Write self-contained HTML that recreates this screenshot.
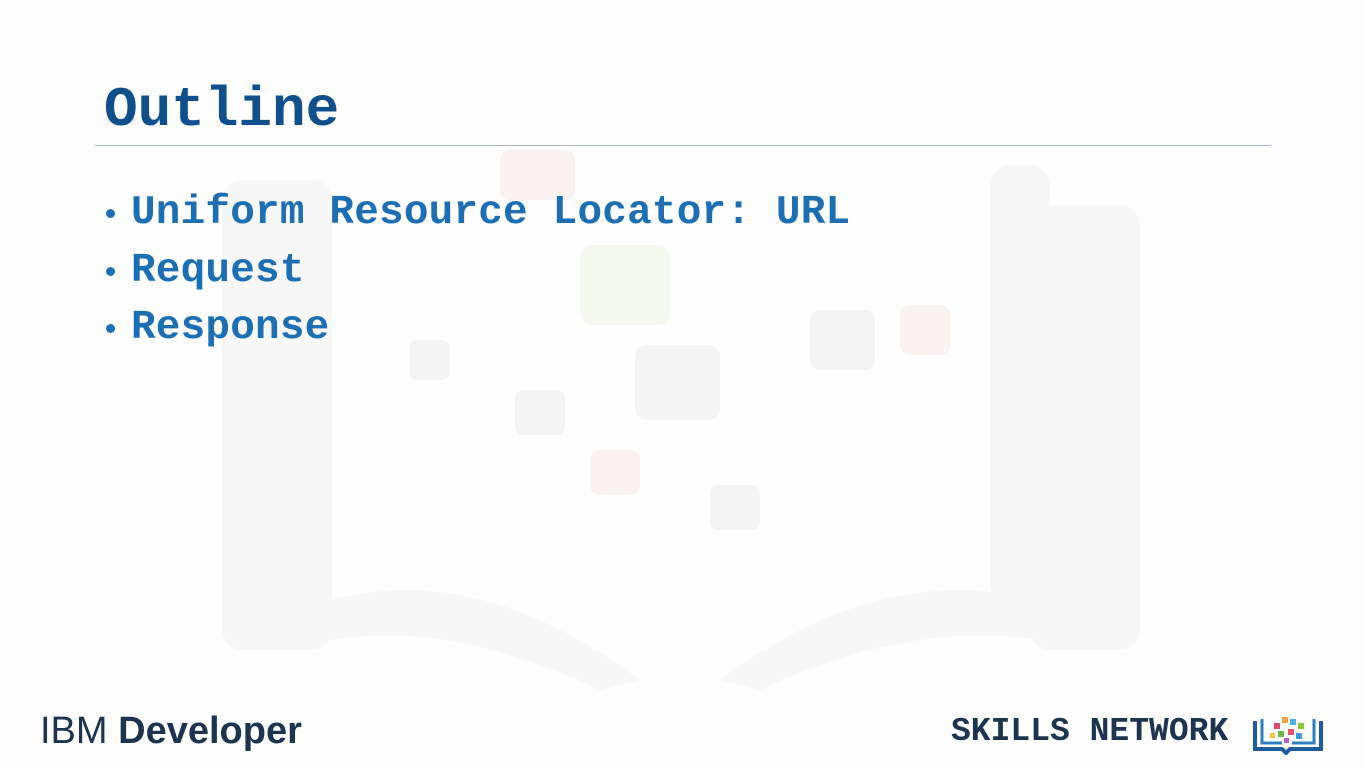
<!DOCTYPE html>
<html><head><meta charset="utf-8"><style>
body{margin:0;width:1366px;height:768px;background:#fdfdfd;position:relative;overflow:hidden;font-family:"Liberation Mono",monospace}
.t{position:absolute;left:104px;top:78px;font-size:56px;font-weight:bold;color:#0f4f8c}
.line{position:absolute;left:95px;top:145px;width:1176px;height:1px;background:#a7b5d2}
.b{position:absolute;left:131px;font-size:41px;font-weight:bold;color:#1c6fb3;letter-spacing:0.2px}
.d{position:absolute;left:106px;width:9px;height:9px;border-radius:50%;background:#1c6fb3}
.ibm{position:absolute;left:40px;top:710px;font-family:"Liberation Sans",sans-serif;font-size:38px;color:#1c3450}
.sk{position:absolute;left:951px;top:713px;font-size:33px;font-weight:bold;color:#1c3450}
</style></head><body>
<svg style="position:absolute;left:0;top:0" width="1366" height="768" opacity="0.5">
<g fill="#f3f3f3">
<rect x="222" y="180" width="110" height="470" rx="20"/>
<rect x="1030" y="205" width="110" height="445" rx="20"/>
<rect x="990" y="165" width="60" height="440" rx="20"/>
<path d="M330 600 Q480 560 640 680 L600 690 Q450 620 330 640Z"/>
<path d="M1040 600 Q880 560 720 680 L760 690 Q910 620 1040 640Z"/>
</g>
<g fill="#ededed"><rect x="635" y="345" width="85" height="75" rx="12"/><rect x="810" y="310" width="65" height="60" rx="10"/><rect x="515" y="390" width="50" height="45" rx="8"/><rect x="710" y="485" width="50" height="45" rx="8"/><rect x="410" y="340" width="40" height="40" rx="8"/></g>
<g fill="#f8e6e6"><rect x="500" y="150" width="75" height="50" rx="10"/><rect x="900" y="305" width="50" height="50" rx="10"/><rect x="590" y="450" width="50" height="45" rx="10"/></g>
<rect x="580" y="245" width="90" height="80" rx="12" fill="#eef4e6"/>
</svg>
<div class="t">Outline</div>
<div class="line"></div>
<div class="d" style="top:209px"></div><div class="b" style="top:190px">Uniform Resource Locator: URL</div>
<div class="d" style="top:267px"></div><div class="b" style="top:248px">Request</div>
<div class="d" style="top:324px"></div><div class="b" style="top:305px">Response</div>
<div class="ibm">IBM <b>Developer</b></div>
<div class="sk">SKILLS NETWORK</div>
<svg style="position:absolute;left:1252px;top:713px" width="72" height="42">
<path d="M3 8 V36 H30 L34 40 L38 36 H69 V8" fill="none" stroke="#1f5a9a" stroke-width="4"/>
<path d="M10 6 V30 H30 M62 6 V30 H40" fill="none" stroke="#2d7fc4" stroke-width="3"/>
<rect x="22" y="10" width="6" height="6" fill="#e14b6f"/><rect x="30" y="4" width="6" height="6" fill="#f4a340"/><rect x="38" y="6" width="6" height="6" fill="#4fb0e0"/><rect x="46" y="10" width="6" height="6" fill="#8cc63f"/><rect x="26" y="18" width="6" height="6" fill="#67bd45"/><rect x="36" y="16" width="6" height="6" fill="#e6566f"/><rect x="44" y="20" width="6" height="6" fill="#3aa0dc"/><rect x="32" y="25" width="5" height="5" fill="#b15ec8"/><rect x="18" y="20" width="5" height="5" fill="#f6c342"/>
</svg>
</body></html>
